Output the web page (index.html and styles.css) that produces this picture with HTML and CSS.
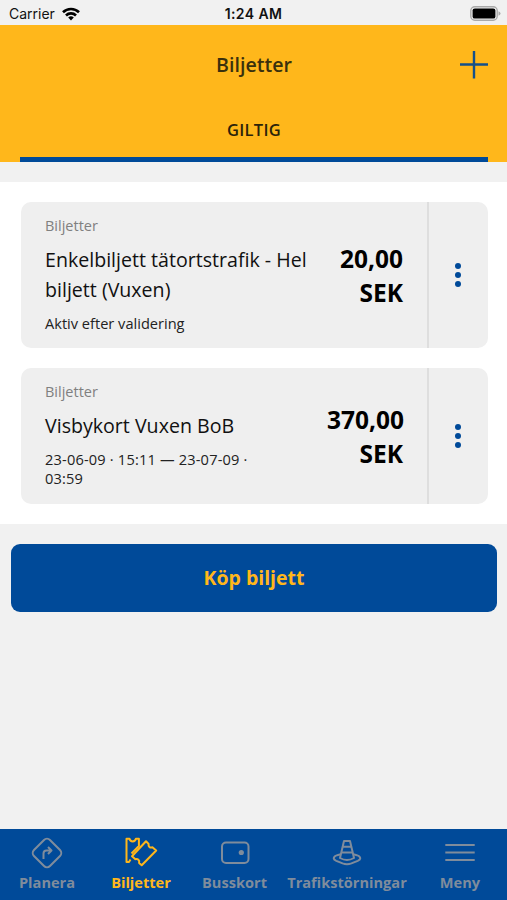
FILE: index.html
```html
<!DOCTYPE html>
<html lang="sv">
<head>
<meta charset="utf-8">
<meta name="viewport" content="width=device-width, initial-scale=1">
<title>Biljetter</title>
<link rel="stylesheet" href="styles.css">
</head>
<body>
<div class="app">
  <div class="status">
    <div class="carrier"><span>Carrier</span>
      <svg width="18" height="14" viewBox="0 0 18 14"><g fill="none" stroke="#000" stroke-width="2.6"><path d="M1 5.3a11.4 11.4 0 0 1 16 0"/><path d="M4 8.5a7 7 0 0 1 10 0"/></g><path d="M9 13.5 6.2 10.6a4 4 0 0 1 5.6 0z"/></svg>
    </div>
    <div class="time">1:24 AM</div>
    <svg class="battery" width="31" height="15" viewBox="0 0 31 15"><rect x=".8" y=".8" width="26.4" height="13.4" rx="4" fill="none" stroke="#a9a9a9" stroke-width="1.4"/><rect x="2.6" y="2.4" width="22.8" height="10.2" rx="2.2"/><path d="M28.5 5.2q2 .8 2 2.3t-2 2.3z" fill="#a9a9a9"/></svg>
  </div>
  <header class="header">
    <div class="titlebar">
      <h1>Biljetter</h1>
      <svg class="plus" width="28" height="28" viewBox="0 0 28 28"><path d="M0 13.5h28M14 0v27.5" stroke="#14508a" stroke-width="2.4"/></svg>
    </div>
    <div class="tab">GILTIG</div>
  </header>
  <main class="tickets">
    <article class="card first">
      <div class="info">
        <div class="kind">Biljetter</div>
        <h2>Enkelbiljett tätortstrafik - Hel<br>biljett (Vuxen)</h2>
        <div class="meta">Aktiv efter validering</div>
      </div>
      <div class="price">20,00<br>SEK</div>
      <div class="more"><i></i><i></i><i></i></div>
    </article>
    <article class="card second">
      <div class="info">
        <div class="kind">Biljetter</div>
        <h2>Visbykort Vuxen BoB</h2>
        <div class="meta dates">23-06-09 · 15:11 — 23-07-09 ·<br>03:59</div>
      </div>
      <div class="price">370,00<br>SEK</div>
      <div class="more"><i></i><i></i><i></i></div>
    </article>
  </main>
  <button class="buy">Köp biljett</button>
  <nav class="nav">
    <div class="item">
      <svg width="34" height="34" viewBox="0 0 34 34"><rect x="5.7" y="5.7" width="22.6" height="22.6" rx="4.2" transform="rotate(45 17 17)"/><path d="M13.5 23v-5.5q0-3 3-3H21M18 11l3.5 3.5L18 18"/></svg>
      <span>Planera</span>
    </div>
    <div class="item active">
      <svg width="34" height="34" viewBox="0 0 34 34"><path d="M6.5 23.5 5 26H2.5V2.8h3q.6 2.6 3.2 2.6t3.2-2.6h3V10L7.5 17.5"/><path d="m22 5.3 2.6 2.6q-.4 2 .8 3t3 .4l3.8 3.2L17.7 29.2l-2.6-2.3q.6-2-.7-3.2t-3-.5L8 20.3z"/></svg>
      <span>Biljetter</span>
    </div>
    <div class="item">
      <svg width="34" height="34" viewBox="0 0 34 34"><rect x="4" y="6.5" width="26.5" height="20.5" rx="4"/><circle cx="23.3" cy="16.5" r="2.6" class="solid"/></svg>
      <span>Busskort</span>
    </div>
    <div class="item">
      <svg width="34" height="34" viewBox="0 0 34 34"><path d="M14 5h6l4 17q-7 4-14 0z"/><path d="M12.8 10.8h8.4M11.4 16.6h11.2M10.6 18.2q-6.9 1.4-6.9 4 0 1.4 2.6 2.6l6.3 2.6q4.4 1.6 8.8 0l6.3-2.6q2.6-1.2 2.6-2.6 0-2.6-6.9-4"/></svg>
      <span>Trafikstörningar</span>
    </div>
    <div class="item">
      <svg width="34" height="34" viewBox="0 0 34 34"><path d="M2.3 9h29.4M2.3 16.5h29.4M2.3 24h29.4"/></svg>
      <span>Meny</span>
    </div>
  </nav>
</div>
</body>
</html>
```
FILE: styles.css
```css
* { box-sizing: border-box; }
body { margin: 0; background: #f1f1f1; font-family: "Open Sans", sans-serif; color: #111; }
.app { width: 507px; height: 900px; display: flex; flex-direction: column; overflow: hidden; }
.status { height: 25px; flex: none; display: grid; grid-template-columns: 1fr auto 1fr; align-items: center; padding: 2px 6px 0 9px; font-family: Inter, sans-serif; font-size: 14px; color: #111; }
.carrier { display: flex; align-items: center; gap: 7px; }
.time { font-weight: 600; font-size: 14px; letter-spacing: .4px; margin-right: 3px; }
.battery { justify-self: end; }
.header { height: 137px; flex: none; background: #ffb71b; padding: 0 19px 0 20px; }
.titlebar { height: 79px; display: grid; grid-template-columns: 28px 1fr 28px; align-items: center; }
h1 { grid-column: 2; margin: 0; text-align: center; font-size: 19.6px; font-weight: 600; color: #3a300d; }
.plus { display: block; }
.tab { height: 58px; border-bottom: 5px solid #004a99; text-align: center; font-size: 16.5px; letter-spacing: .3px; font-weight: 600; line-height: 52px; color: #2b230a; }
.tickets { height: 342px; flex: none; margin-top: 20px; background: #fff; padding: 20px 19px 20px 21px; display: flex; flex-direction: column; gap: 20px; }
.card { display: flex; background: #efefef; border-radius: 10px; }
.first { height: 146px; }
.second { height: 136px; }
.info { flex: 1; padding-left: 24px; padding-top: 14px; white-space: nowrap; }
.kind { font-size: 14.5px; line-height: 20px; color: #808080; }
h2 { margin: 9px 0; font-size: 19.6px; line-height: 30px; font-weight: 400; }
.meta { font-size: 14.6px; line-height: 19px; color: #222; }
.dates { letter-spacing: .18px; }
.price { width: 100px; padding: 1px 24px 0 0; flex: none; align-self: center; text-align: right; font-size: 24.5px; font-weight: 700; line-height: 34px; color: #000; }
.more { width: 61px; padding-right: 1px; flex: none; border-left: 2px solid #dedede; display: flex; flex-direction: column; align-items: center; justify-content: center; gap: 3px; }
.more i { width: 6px; height: 6px; border-radius: 50%; background: #004a99; }
.buy { height: 68px; flex: none; margin: 20px 10px 0 11px; padding: 0 0 2px; border: 0; border-radius: 9px; background: #004a99; color: #ffb71b; font: 700 19.5px "Open Sans", sans-serif; }
.nav { height: 71px; flex: none; margin-top: auto; background: #004a99; display: grid; grid-template-columns: 94px 94px 93px 132px 94px; padding-top: 7px; color: #7f8c9c; }
.item { display: flex; flex-direction: column; align-items: center; font-size: 14.6px; font-weight: 700; line-height: 20px; white-space: nowrap; gap: 2px; }
.item svg { display: block; fill: none; stroke: currentColor; stroke-width: 2; stroke-linejoin: round; flex: none; }
.item .solid { fill: currentColor; stroke: none; }
.active { color: #ffb71b; }
```
